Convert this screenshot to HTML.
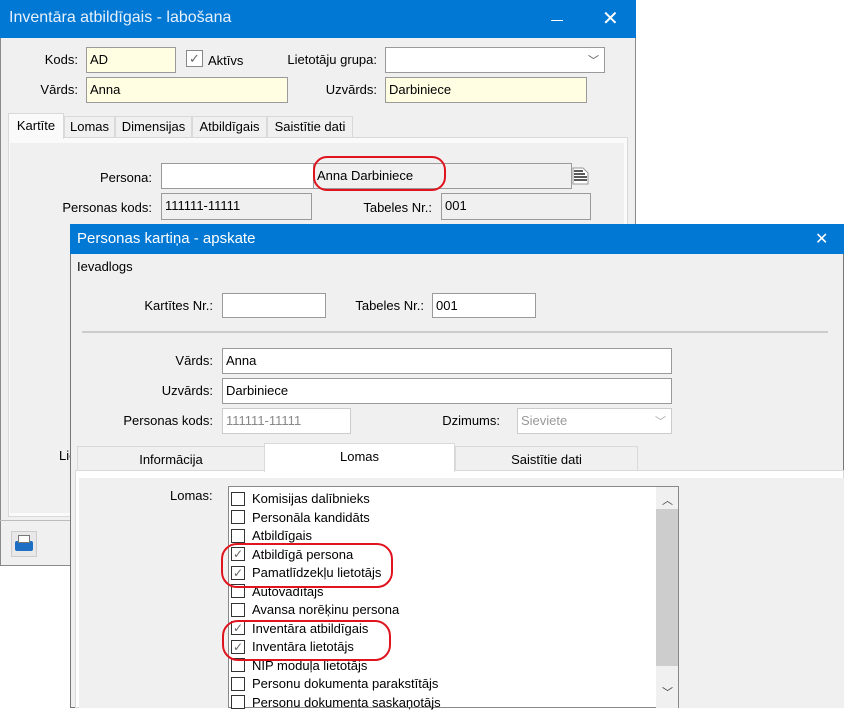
<!DOCTYPE html>
<html><head><meta charset="utf-8"><style>
*{box-sizing:border-box;margin:0;padding:0}
body{width:844px;height:708px;overflow:hidden;background:#fff;font-family:"Liberation Sans","DejaVu Sans",sans-serif;font-size:13px;color:#000;position:relative}
.a{position:absolute}
.lbl{position:absolute;text-align:right;white-space:nowrap}
.in{position:absolute;border:1px solid #9a9a9a;background:#fff;padding:4px 3px;white-space:nowrap;overflow:hidden;line-height:15px}
.y{background:#fffde2}
.g{background:#f0f0f0}
.cb{position:absolute;width:14px;height:14px;border:1px solid #333;background:#fff}
.tab{position:absolute;border:1px solid #d9d9d9;border-bottom:none;background:#f0f0f0;text-align:center;line-height:20px}
.ell{position:absolute;border:2px solid #e0141e;border-radius:14px}
.ck{position:absolute;color:#666;font-size:12px}
</style></head><body>
<!-- back window -->
<div class="a" style="left:0;top:0;width:636px;height:566px;background:#f0f0f0;border:1px solid #8a8a8a"></div>
<div class="a" style="left:0;top:0;width:636px;height:38px;background:#0078d4"></div>
<div class="a" style="left:9px;top:9px;color:#e8f1fb;font-size:16px">Inventāra atbildīgais - labošana</div>
<div class="a" style="left:551px;top:20px;width:12px;height:1px;background:#fff"></div>
<div class="a" style="left:602px;top:6px;color:#fff;font-size:20px">✕</div>
<div class="lbl" style="right:766px;top:52px">Kods:</div>
<div class="in y" style="left:86px;top:47px;width:90px;height:26px">AD</div>
<div class="cb" style="left:186px;top:50px;width:17px;height:17px;border-color:#888"></div>
<div class="ck" style="left:189px;top:51px;font-size:13px">✓</div>
<div class="a" style="left:208px;top:53px">Aktīvs</div>
<div class="lbl" style="right:467px;top:52px">Lietotāju grupa:</div>
<div class="in" style="left:385px;top:47px;width:220px;height:26px"></div>
<div class="a" style="left:588px;top:52px;color:#555;font-size:11px">﹀</div>
<div class="lbl" style="right:766px;top:82px">Vārds:</div>
<div class="in y" style="left:86px;top:77px;width:202px;height:26px">Anna</div>
<div class="lbl" style="right:467px;top:82px">Uzvārds:</div>
<div class="in y" style="left:385px;top:77px;width:202px;height:26px">Darbiniece</div>
<div class="tab" style="left:64px;top:116px;width:51px;height:22px">Lomas</div>
<div class="tab" style="left:115px;top:116px;width:77px;height:22px">Dimensijas</div>
<div class="tab" style="left:192px;top:116px;width:75px;height:22px">Atbildīgais</div>
<div class="tab" style="left:267px;top:116px;width:86px;height:22px">Saistītie dati</div>
<div class="a" style="left:8px;top:137px;width:620px;height:380px;background:#fafafa;border:1px solid #d9d9d9"></div>
<div class="a" style="left:10px;top:143px;width:614px;height:370px;background:#f0f0f0"></div>
<div class="tab" style="left:8px;top:113px;width:56px;height:26px;background:#fafafa;line-height:24px">Kartīte</div>
<div class="lbl" style="right:692px;top:170px">Persona:</div>
<div class="in" style="left:161px;top:163px;width:153px;height:26px"></div>
<div class="in g" style="left:313px;top:163px;width:259px;height:26px">Anna Darbiniece</div>
<svg class="a" style="left:572px;top:167px" width="18" height="18" viewBox="0 0 18 18"><path d="M1 1h10l5 5v11H1z" fill="#fff" stroke="#999"/><path d="M2 4h9M2 7h11M2 10h13M2 13h13" stroke="#222" stroke-width="1.6"/></svg>
<div class="lbl" style="right:692px;top:200px">Personas kods:</div>
<div class="in g" style="left:161px;top:193px;width:151px;height:27px">111111-11111</div>
<div class="lbl" style="right:412px;top:200px">Tabeles Nr.:</div>
<div class="in g" style="left:441px;top:193px;width:150px;height:27px">001</div>
<div class="ell" style="left:313px;top:156px;width:133px;height:35px"></div>
<div class="a" style="left:59px;top:448px">Lie</div>
<div class="a" style="left:0;top:520px;width:70px;height:1px;background:#bbb"></div>
<div class="a" style="left:11px;top:531px;width:26px;height:26px;border:1px solid #ccc;background:#e8e8e8"></div>
<div class="a" style="left:15px;top:541px;width:18px;height:10px;background:#1c6fc4;border-radius:2px"></div>
<div class="a" style="left:18px;top:535px;width:12px;height:8px;background:#fff;border:1px solid #777"></div>
<!-- front window -->
<div class="a" style="left:70px;top:224px;width:774px;height:484px;background:#f0f0f0;border:1px solid #777"></div>
<div class="a" style="left:70px;top:224px;width:774px;height:30px;background:#0078d4"></div>
<div class="a" style="left:77px;top:230px;color:#fff;font-size:15px">Personas kartiņa - apskate</div>
<div class="a" style="left:815px;top:229px;color:#fff;font-size:16px">✕</div>
<div class="a" style="left:77px;top:259px">Ievadlogs</div>
<div class="lbl" style="right:631px;top:298px">Kartītes Nr.:</div>
<div class="in" style="left:222px;top:293px;width:104px;height:25px"></div>
<div class="lbl" style="right:420px;top:298px">Tabeles Nr.:</div>
<div class="in" style="left:432px;top:293px;width:104px;height:25px">001</div>
<div class="a" style="left:82px;top:331px;width:746px;height:2px;background:#ccc"></div>
<div class="lbl" style="right:631px;top:353px">Vārds:</div>
<div class="in" style="left:222px;top:348px;width:450px;height:26px">Anna</div>
<div class="lbl" style="right:631px;top:383px">Uzvārds:</div>
<div class="in" style="left:222px;top:378px;width:450px;height:26px">Darbiniece</div>
<div class="lbl" style="right:631px;top:413px">Personas kods:</div>
<div class="in" style="left:222px;top:408px;width:129px;height:26px;color:#888;border-color:#ccc">111111-11111</div>
<div class="lbl" style="right:344px;top:413px">Dzimums:</div>
<div class="in" style="left:517px;top:408px;width:155px;height:26px;color:#999;border-color:#ccc">Sieviete</div>
<div class="a" style="left:655px;top:413px;color:#aaa;font-size:11px">﹀</div>
<div class="tab" style="left:77px;top:446px;width:188px;height:25px;line-height:26px;background:#f0f0f0">Informācija</div>
<div class="tab" style="left:455px;top:446px;width:183px;height:25px;line-height:26px">Saistītie dati</div>
<div class="a" style="left:75px;top:470px;width:769px;height:238px;background:#fff;border:1px solid #d9d9d9"></div>
<div class="a" style="left:79px;top:478px;width:765px;height:230px;background:#f0f0f0"></div>
<div class="tab" style="left:264px;top:443px;width:191px;height:29px;background:#fff;line-height:26px">Lomas</div>
<div class="a" style="left:170px;top:488px">Lomas:</div>
<div class="a" style="left:228px;top:486px;width:451px;height:222px;background:#fff;border:1px solid #888"></div>
<div class="a" style="left:656px;top:487px;width:22px;height:221px;background:#f0f0f0"></div>
<div class="a" style="left:656px;top:509px;width:22px;height:157px;background:#cdcdcd"></div>
<div class="a" style="left:662px;top:492px;font-size:11px;color:#444">︿</div>
<div class="a" style="left:662px;top:684px;font-size:11px;color:#444">﹀</div>
<div class="a" style="left:230px;top:490px;line-height:18.5px">
<div style="position:relative;padding-left:22px">
<div>Komisijas dalībnieks</div><div>Personāla kandidāts</div><div>Atbildīgais</div><div>Atbildīgā persona</div><div>Pamatlīdzekļu lietotājs</div><div>Autovadītājs</div><div>Avansa norēķinu persona</div><div>Inventāra atbildīgais</div><div>Inventāra lietotājs</div><div>NIP moduļa lietotājs</div><div>Personu dokumenta parakstītājs</div><div>Personu dokumenta saskaņotājs</div>
</div></div>
<div class="cb" style="left:231px;top:492px"></div><div class="cb" style="left:231px;top:510px"></div><div class="cb" style="left:231px;top:529px"></div>
<div class="cb" style="left:231px;top:547px"></div><div class="ck" style="left:233px;top:547px">✓</div>
<div class="cb" style="left:231px;top:566px"></div><div class="ck" style="left:233px;top:566px">✓</div>
<div class="cb" style="left:231px;top:584px"></div><div class="cb" style="left:231px;top:603px"></div>
<div class="cb" style="left:231px;top:621px"></div><div class="ck" style="left:233px;top:621px">✓</div>
<div class="cb" style="left:231px;top:640px"></div><div class="ck" style="left:233px;top:640px">✓</div>
<div class="cb" style="left:231px;top:658px"></div><div class="cb" style="left:231px;top:677px"></div><div class="cb" style="left:231px;top:695px"></div>
<div class="ell" style="left:221px;top:543px;width:172px;height:45px;border-radius:16px"></div>
<div class="ell" style="left:222px;top:620px;width:169px;height:41px;border-radius:16px"></div>
</body></html>
